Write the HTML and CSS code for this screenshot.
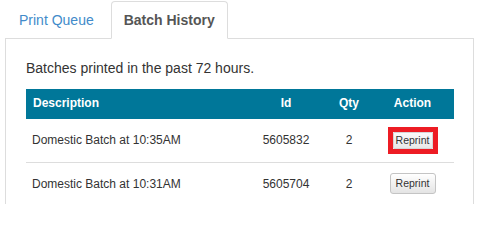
FILE: index.html
```html
<!DOCTYPE html>
<html>
<head>
<meta charset="utf-8">
<link rel="stylesheet" href="styles.css">
</head>
<body>
<div class="wrap">
  <ul class="tabs">
    <li class="tab"><a class="tab-link" href="#">Print Queue</a></li>
    <li class="tab active"><a class="tab-link" href="#">Batch History</a></li>
  </ul>
  <div class="panel">
    <p class="intro">Batches printed in the past 72 hours.</p>
    <table class="batches">
      <thead>
        <tr>
          <th class="c-desc">Description</th>
          <th class="c-id">Id</th>
          <th class="c-qty">Qty</th>
          <th class="c-act">Action</th>
        </tr>
      </thead>
      <tbody>
        <tr>
          <td class="c-desc">Domestic Batch at 10:35AM</td>
          <td class="c-id">5605832</td>
          <td class="c-qty">2</td>
          <td class="c-act"><span class="hl"><button class="btn btn-small">Reprint</button></span></td>
        </tr>
        <tr>
          <td class="c-desc">Domestic Batch at 10:31AM</td>
          <td class="c-id">5605704</td>
          <td class="c-qty">2</td>
          <td class="c-act"><button class="btn">Reprint</button></td>
        </tr>
      </tbody>
    </table>
  </div>
</div>
</body>
</html>
```

FILE: styles.css
```css
html, body {
  margin: 0;
  padding: 0;
  background: #fff;
}
body {
  font-family: "Liberation Sans", Arial, sans-serif;
  color: #333;
}
.wrap {
  padding: 1px 0 0 5px;
  width: 469px;
}
.tabs {
  list-style: none;
  margin: 0 0 -1px 0;
  padding: 0;
  display: flex;
  align-items: flex-end;
}
.tab {
  margin-right: 4px;
  position: relative;
}
.tab-link {
  display: block;
  height: 36px;
  line-height: 36px;
  padding: 0 12px 0 13px;
  border: 1px solid transparent;
  border-radius: 4px 4px 0 0;
  font-size: 14px;
  color: #428bca;
  text-decoration: none;
}
.tab.active .tab-link {
  padding: 0 12px;
  border-color: #ddd #ddd #fff #ddd;
  background: #fff;
  color: #555;
  font-weight: bold;
}
.panel {
  border: 1px solid #ddd;
  border-bottom: none;
  padding: 19px 19px 0 20px;
  height: 146px;
  overflow: hidden;
}
.intro {
  margin: 0;
  font-size: 14px;
  line-height: 20px;
  color: #333;
}
.batches {
  margin-top: 11px;
  width: 428px;
  border-collapse: collapse;
  table-layout: fixed;
  font-size: 12px;
}
.batches th {
  height: 30px;
  padding: 0 6px 2px 7px;
  background: #007799;
  color: #fff;
  font-weight: bold;
  vertical-align: middle;
  box-sizing: border-box;
}
.batches td {
  height: 43px;
  padding: 0 6px;
  border-bottom: 1px solid #ddd;
  vertical-align: middle;
  color: #333;
  box-sizing: border-box;
}
.c-desc { width: 219px; text-align: left; }
.c-id { width: 82px; text-align: center; }
.c-qty { width: 44px; text-align: center; }
.c-act { width: 83px; text-align: center; }
.batches th.c-id, .batches th.c-qty, .batches th.c-act,
.batches td.c-id, .batches td.c-qty, .batches td.c-act {
  padding-left: 0;
  padding-right: 0;
}
.btn {
  display: inline-block;
  box-sizing: border-box;
  width: 46px;
  height: 21px;
  padding: 0;
  margin: 0;
  border: 1px solid #c4c4c4;
  border-radius: 3px;
  background: linear-gradient(#ffffff, #e4e4e4);
  font-family: "Liberation Sans", Arial, sans-serif;
  font-size: 10.5px;
  color: #333;
  vertical-align: middle;
  line-height: 19px;
}
.hl {
  display: inline-block;
  border: 5px solid #ed1c24;
  line-height: 0;
  vertical-align: middle;
}
.btn-small {
  width: 40px;
  height: 17px;
  line-height: 15px;
  border-radius: 1px;
  border-color: #d6d6d6;
  background: linear-gradient(#fafafa, #e8e8e8);
}
```
